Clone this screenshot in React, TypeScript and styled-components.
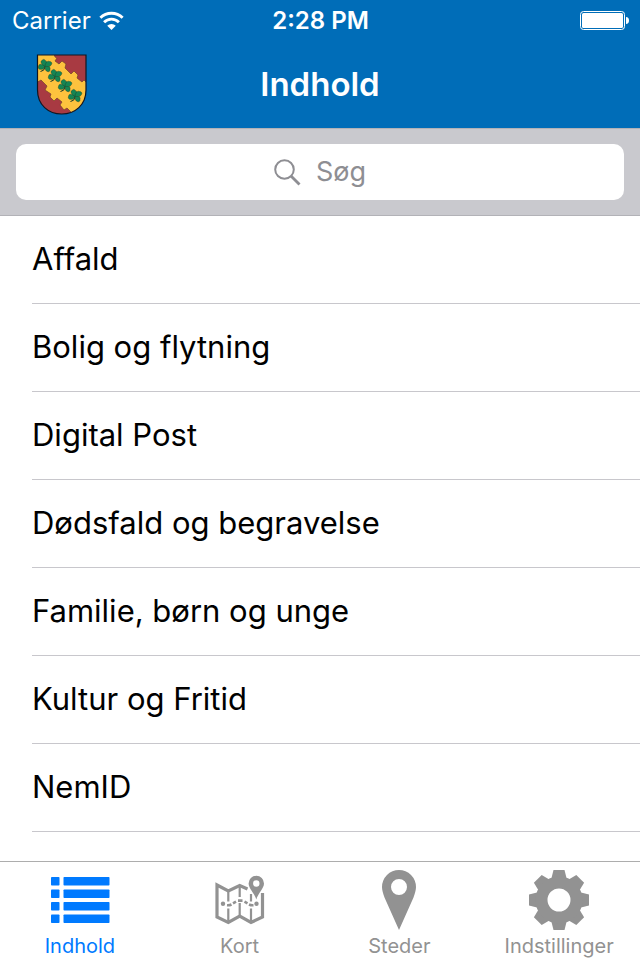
import React from "react";
import styled, { createGlobalStyle } from "styled-components";

const GlobalStyle = createGlobalStyle`
  *, *::before, *::after { box-sizing: border-box; }
  body {
    margin: 0;
    background: #fff;
    font-family: Inter, "Liberation Sans", sans-serif;
  }
`;

const Screen = styled.div`
  display: flex;
  flex-direction: column;
  height: 100vh;
`;

const Header = styled.header`
  background: #006db8;
  color: #fff;
`;

const StatusBar = styled.div`
  display: grid;
  grid-template-columns: 1fr auto 1fr;
  align-items: center;
  height: 40px;
  padding: 0 11px 0 12px;
  font-size: 24px;
`;

const Carrier = styled.div`
  display: flex;
  align-items: center;
  gap: 8px;
`;

const Clock = styled.time`
  font-weight: 600;
`;

const BatterySlot = styled.div`
  display: flex;
  justify-content: flex-end;
`;

const NavBar = styled.div`
  display: grid;
  grid-template-columns: 1fr auto 1fr;
  align-items: center;
  height: 88px;
  padding: 0 36px;
`;

const CrestButton = styled.button`
  justify-self: start;
  display: flex;
  padding: 0;
  border: 0;
  background: none;
`;

const Title = styled.h1`
  margin: 0;
  font-size: 33px;
  font-weight: 600;
  line-height: 40px;
`;

const SearchBar = styled.form`
  padding: 15px 16px;
  background: #c9c9ce;
  border-top: 1px solid #b2b2b7;
  border-bottom: 1px solid #b2b2b7;
`;

const SearchField = styled.label`
  display: flex;
  align-items: center;
  justify-content: center;
  gap: 15px;
  height: 56px;
  border-radius: 10px;
  background: #fff;
  color: #8e8e93;
`;

const SearchInput = styled.input`
  field-sizing: content;
  padding: 0;
  border: 0;
  outline: 0;
  background: none;
  color: #000;
  font: inherit;
  font-size: 27px;
  line-height: 36px;

  &::placeholder {
    color: #8e8e93;
    opacity: 1;
  }
`;

const List = styled.ul`
  flex: 1;
  min-height: 0;
  margin: 0;
  padding: 0 0 0 32px;
  overflow: hidden auto;
  list-style: none;
`;

const Row = styled.li`
  border-bottom: 1px solid #c8c7cc;
`;

const RowLink = styled.a`
  display: flex;
  align-items: center;
  height: 87px;
  padding-bottom: 2px;
  color: #000;
  font-size: 31px;
  text-decoration: none;
`;

const TabBar = styled.nav`
  display: grid;
  grid-template-columns: repeat(4, 1fr);
  padding-right: 1px;
  border-top: 1px solid #adadad;
  background: #fff;
`;

const Tab = styled.button<{ $active?: boolean }>`
  display: flex;
  flex-direction: column;
  align-items: center;
  gap: 4px;
  height: 98px;
  padding: 8px 0 0;
  border: 0;
  background: none;
  color: ${(p) => (p.$active ? "#007aff" : "#929292")};
  font: inherit;
  font-size: 20px;
  line-height: 24px;
`;

const WifiIcon = () => (
  <svg width="25" height="19" viewBox="0 0 26 20" fill="none" stroke="#fff" strokeWidth="3" aria-hidden="true">
    <path d="M1.3 7.200a16.600 16.600 0 0 1 23.400 0" />
    <path d="M5.200 11.800a11 11 0 0 1 15.600 0" />
    <path d="M13 20l-4.500-4.500a6.400 6.400 0 0 1 9 0z" fill="#fff" stroke="none" />
  </svg>
);

const BatteryIcon = () => (
  <svg width="49" height="19" viewBox="0 0 49 19" fill="#fff" aria-label="Batteri" role="img">
    <rect x="0.5" y="0.5" width="44" height="18" rx="3" fill="none" stroke="#fff" />
    <rect x="2" y="2" width="41" height="15" rx="1.500" />
    <path d="M46 6c2 0 3 1.500 3 3.500s-1 3.500-3 3.500z" />
  </svg>
);

const Clover = ({ x, y }: { x: number; y: number }) => (
  <g transform={`translate(${x} ${y})`}>
    <path d="M0 1Q-0.500 5-4.500 5.500" fill="none" stroke="#12332a" strokeWidth="1" />
    <g fill="#168553" stroke="#12332a" strokeWidth="0.350">
      <path d="M0 0.500C-2-2.500-6.500-2.500-6.300 0-7.500 1.500-6 4-4 3.300-2 4-1 2 0 0.500z" />
      <path d="M0 0.500C-3-1-5.500-4.500-3-5.500-2-7.500 0.500-6.500 0.500-5 3-5 2-1.500 0 0.500z" />
      <path d="M0 0.500C0-2.500 2.500-6 4.500-4.500 7-4.500 7.500-2 6-1 5.500 1 2.500 1 0 0.500z" />
      <path d="M0 0.500C2.500 0 6 1 5 3 5.500 5.500 3.500 6.500 2 5.300 0.500 5 0 3 0 0.500z" />
    </g>
  </g>
);

const Crest = () => (
  <svg width="51" height="61" viewBox="0 0 51 61" aria-hidden="true">
    <defs>
      <clipPath id="shield">
        <path d="M1.500 1H50V36C50 51 39 60 25.700 60S1.500 51 1.500 36z" />
      </clipPath>
    </defs>
    <g clipPath="url(#shield)">
      <rect width="51" height="61" fill="#a83a42" />
      <path
        d="M0 0H18L19 3 21 4 19 7 23 10 26 7 30 10 29 14 33 18 35 20 38 17 42 21 41 24 46 28 48 26 51 29V61H32L35 58 31 54 28 56 24 51 26 48 21 44 18 47 14 43 15 40 9 36 11 32 5 26 0 29z"
        fill="#fdc23e"
        stroke="#71402c"
        strokeWidth="0.700"
      />
      <Clover x={9} y={12} />
      <Clover x={19} y={22} />
      <Clover x={29} y={32} />
      <Clover x={39} y={42} />
    </g>
    <path d="M1.500 1H50V36C50 51 39 60 25.700 60S1.500 51 1.500 36z" fill="none" stroke="#111622" strokeWidth="1.200" />
  </svg>
);

const SearchIcon = () => (
  <svg width="27" height="27" viewBox="0 0 27 27" fill="none" stroke="currentColor" aria-hidden="true">
    <circle cx="10.500" cy="10.500" r="9.300" strokeWidth="2" />
    <path d="M17 17l8.500 8.500" strokeWidth="2.800" />
  </svg>
);

const ListIcon = () => (
  <svg width="60" height="60" viewBox="0 0 60 60" fill="currentColor" aria-hidden="true">
    {[7, 19.5, 32, 44.5].map((y) => (
      <g key={y}>
        <rect x="1" y={y} width="8.500" height="8.500" rx="0.800" />
        <rect x="13.500" y={y} width="46" height="8.500" rx="0.800" />
      </g>
    ))}
  </svg>
);

const MapIcon = () => (
  <svg width="60" height="60" viewBox="0 0 60 60" fill="none" stroke="currentColor" aria-hidden="true">
    <path d="M37.500 19L29.700 15.500 18.300 21 7 15V47L18.300 52.500 29.700 46 41 52.500 52.500 47V23" strokeWidth="3.200" />
    <path d="M18.300 20v11.500M18.300 38.500v13M29.700 16v11M29.700 33v12M41 24v7.500M41 38.500v13" strokeWidth="2.200" />
    <path d="M17 35.200Q19.500 35.400 21.500 34.500M23 33.300l3-1.700M28 30.600h4.500M34.500 31.600l3 1.700M39 34.500Q41 35.400 43.500 35.200" strokeWidth="2.600" />
    <circle cx="13" cy="33.700" r="2.200" fill="currentColor" stroke="none" />
    <circle cx="46.500" cy="33.700" r="2.200" fill="currentColor" stroke="none" />
    <path
      d="M46.300 29.500C45 24 38.600 18.500 38.600 13.500a7.700 7.700 0 0 1 15.400 0C54 18.500 47.600 24 46.300 29.500zM46.300 10.300a3.200 3.200 0 1 0 0 6.400 3.200 3.200 0 0 0 0-6.400z"
      fill="currentColor"
      fillRule="evenodd"
      stroke="none"
    />
  </svg>
);

const PinIcon = () => (
  <svg width="60" height="60" viewBox="0 0 60 60" fill="currentColor" aria-hidden="true">
    <path
      d="M30 60L15.500 27.500C14 23 13 20 13 17a17 17 0 0 1 34 0c0 3-1 6-2.500 10.500zM30 9a8 8 0 1 0 0 16 8 8 0 0 0 0-16z"
      fillRule="evenodd"
    />
  </svg>
);

const GearIcon = () => (
  <svg width="60" height="60" viewBox="-30 -30 60 60" fill="currentColor" aria-hidden="true">
    {[0, 45, 90, 135, 180, 225, 270, 315].map((angle) => (
      <path key={angle} d="M-5.500-30H5.500L8-20H-8z" transform={`rotate(${angle})`} />
    ))}
    <circle r="17.500" fill="none" stroke="currentColor" strokeWidth="12" />
  </svg>
);

const topics = [
  "Affald",
  "Bolig og flytning",
  "Digital Post",
  "Dødsfald og begravelse",
  "Familie, børn og unge",
  "Kultur og Fritid",
  "NemID",
];

const tabs = [
  { label: "Indhold", Icon: ListIcon },
  { label: "Kort", Icon: MapIcon },
  { label: "Steder", Icon: PinIcon },
  { label: "Indstillinger", Icon: GearIcon },
];

export default function App() {
  return (
    <Screen>
      <GlobalStyle />
      <Header>
        <StatusBar>
          <Carrier>
            Carrier
            <WifiIcon />
          </Carrier>
          <Clock>2:28 PM</Clock>
          <BatterySlot>
            <BatteryIcon />
          </BatterySlot>
        </StatusBar>
        <NavBar>
          <CrestButton type="button" aria-label="Kommune">
            <Crest />
          </CrestButton>
          <Title>Indhold</Title>
        </NavBar>
      </Header>
      <SearchBar role="search">
        <SearchField>
          <SearchIcon />
          <SearchInput type="text" placeholder="Søg" aria-label="Søg" />
        </SearchField>
      </SearchBar>
      <List>
        {topics.map((topic) => (
          <Row key={topic}>
            <RowLink href="#">{topic}</RowLink>
          </Row>
        ))}
      </List>
      <TabBar>
        {tabs.map(({ label, Icon }, index) => (
          <Tab key={label} type="button" $active={index === 0}>
            <Icon />
            {label}
          </Tab>
        ))}
      </TabBar>
    </Screen>
  );
}
